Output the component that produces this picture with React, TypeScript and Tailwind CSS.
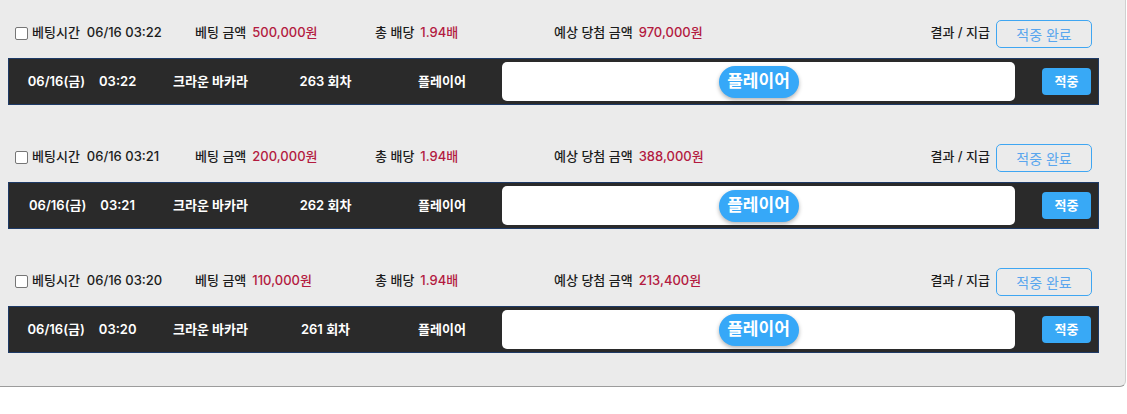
const bets = [
  { time: '03:22', amount: '500,000원', round: '263', win: '970,000원' },
  { time: '03:21', amount: '200,000원', round: '262', win: '388,000원' },
  { time: '03:20', amount: '110,000원', round: '261', win: '213,400원' },
];

const font = "font-['Inter','Noto_Sans_CJK_KR',sans-serif]";

const BetRow = ({ bet }: { bet: (typeof bets)[number] }) => (
  <div className="flex flex-col">
    {/* summary line */}
    <div className="flex h-[28px] items-center pl-[15px] pr-[33px] text-[13px] font-medium text-[#1c1c1c]">
      <div className="flex w-[180px] items-center pb-[3px]">
        <span className="mr-[4px] mt-[2px] h-[13px] w-[13px] rounded-[2px] border border-[#767676] bg-white" />
        <span>베팅시간</span>
        <span className="ml-[7px]">06/16 {bet.time}</span>
      </div>
      <div className="flex w-[180px] items-center pb-[3px]">
        <span>베팅 금액</span>
        <span className="ml-[6px] text-[#b31a3f]">{bet.amount}</span>
      </div>
      <div className="flex w-[179px] items-center pb-[3px]">
        <span>총 배당</span>
        <span className="ml-[6px] text-[#b31a3f]">1.94배</span>
      </div>
      <div className="flex items-center pb-[3px]">
        <span>예상 당첨 금액</span>
        <span className="ml-[6px] text-[#b31a3f]">{bet.win}</span>
      </div>
      <div className="ml-auto flex items-center">
        <span className="pb-[3px]">결과 / 지급</span>
        <button className="ml-[6px] flex h-[28px] w-[96px] items-center justify-center rounded-[5px] border border-[#3fa6f2] text-[14px] font-normal text-[#5aa6ee]">
          적중 완료
        </button>
      </div>
    </div>

    {/* detail bar */}
    <div className="ml-[8px] mr-[26px] mt-[10px] flex h-[47px] items-center border border-[#1e3a66] bg-[#2a2a2a] text-[13px] font-semibold text-white">
      <div className="flex w-[146px] justify-center">
        <span>06/16(금)</span>
        <span className="ml-[14px]">{bet.time}</span>
      </div>
      <div className="w-[111px] text-center">크라운 바카라</div>
      <div className="w-[119px] text-center">{bet.round} 회차</div>
      <div className="w-[114px] text-center">플레이어</div>
      <div className="ml-[3px] flex h-[39px] w-[513px] items-center justify-center rounded-[5px] bg-white">
        <span className="flex h-[32px] w-[80px] items-center justify-center rounded-full bg-[#36a8f8] text-[17px] font-bold text-white shadow-[0_2px_4px_rgba(0,0,0,0.3)]">
          플레이어
        </span>
      </div>
      <button className="ml-auto mr-[7px] flex h-[27px] w-[49px] items-center justify-center rounded-[4px] bg-[#38a9f6] text-[13px] font-bold text-white">
        적중
      </button>
    </div>
  </div>
);

export default function App() {
  return (
    <div className={`min-h-[414px] w-full bg-white ${font}`}>
      <div className="flex w-[1126px] flex-col gap-[39px] rounded-br-[6px] border-b border-r border-b-[#9c9c9c] border-r-[#d0d0d0] bg-[#ebebeb] pb-[33px] pt-[20px]">
        {bets.map((b) => (
          <BetRow key={b.round} bet={b} />
        ))}
      </div>
    </div>
  );
}
